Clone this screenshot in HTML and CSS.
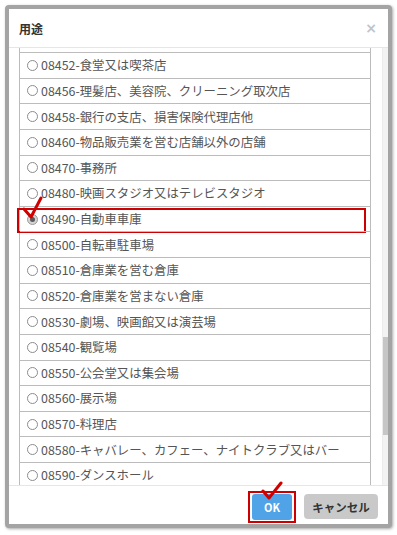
FILE: index.html
```html
<!DOCTYPE html>
<html lang="ja">
<head>
<meta charset="utf-8">
<title>用途</title>
<link rel="stylesheet" href="styles.css">
</head>
<body>
<div class="page">
  <div class="dialog">
    <div class="header">
      <span class="title">用途</span>
      <span class="close">×</span>
    </div>
    <div class="body">
      <div class="viewport">
        <div class="list">
          <div class="row-stub"></div>
          <div class="row"><span class="radio"></span><span class="label">08452-食堂又は喫茶店</span></div>
          <div class="row"><span class="radio"></span><span class="label">08456-理髪店、美容院、クリーニング取次店</span></div>
          <div class="row"><span class="radio"></span><span class="label">08458-銀行の支店、損害保険代理店他</span></div>
          <div class="row"><span class="radio"></span><span class="label">08460-物品販売業を営む店舗以外の店舗</span></div>
          <div class="row"><span class="radio"></span><span class="label">08470-事務所</span></div>
          <div class="row"><span class="radio"></span><span class="label">08480-映画スタジオ又はテレビスタジオ</span></div>
          <div class="row selected"><span class="radio checked"></span><span class="label">08490-自動車車庫</span></div>
          <div class="row"><span class="radio"></span><span class="label">08500-自転車駐車場</span></div>
          <div class="row"><span class="radio"></span><span class="label">08510-倉庫業を営む倉庫</span></div>
          <div class="row"><span class="radio"></span><span class="label">08520-倉庫業を営まない倉庫</span></div>
          <div class="row"><span class="radio"></span><span class="label">08530-劇場、映画館又は演芸場</span></div>
          <div class="row"><span class="radio"></span><span class="label">08540-観覧場</span></div>
          <div class="row"><span class="radio"></span><span class="label">08550-公会堂又は集会場</span></div>
          <div class="row"><span class="radio"></span><span class="label">08560-展示場</span></div>
          <div class="row"><span class="radio"></span><span class="label">08570-料理店</span></div>
          <div class="row"><span class="radio"></span><span class="label">08580-キャバレー、カフェー、ナイトクラブ又はバー</span></div>
          <div class="row"><span class="radio"></span><span class="label">08590-ダンスホール</span></div>
        </div>
      </div>
      <div class="scrollbar"><div class="thumb"></div></div>
    </div>
    <div class="footer">
      <button class="btn ok">OK</button>
      <button class="btn cancel">キャンセル</button>
    </div>
  </div>
  <svg class="check check-row" width="24" height="24" viewBox="0 0 24 24">
    <polyline points="3,13 10,21 20,2" fill="none" stroke="#d00000" stroke-width="3" stroke-linejoin="round" stroke-linecap="round"/>
  </svg>
  <svg class="check check-ok" width="24" height="20" viewBox="0 0 24 20">
    <polyline points="2,10 8,17 20,2" fill="none" stroke="#d00000" stroke-width="3" stroke-linejoin="round" stroke-linecap="round"/>
  </svg>
</div>
</body>
</html>
```
FILE: styles.css
```css
html, body {
  margin: 0;
  padding: 0;
  background: #ffffff;
}

body {
  font-family: "Noto Sans CJK JP", "Noto Sans", sans-serif;
  color: #555555;
}

.page {
  position: relative;
  width: 397px;
  height: 535px;
  padding: 5px 0 0 5px;
  box-sizing: border-box;
}

.dialog {
  width: 387px;
  height: 523px;
  box-sizing: border-box;
  border: 4px solid #a4a4a4;
  border-radius: 4px;
  box-shadow: 1px 1px 3px rgba(0, 0, 0, 0.35);
  background: #ffffff;
  display: flex;
  flex-direction: column;
}

.header {
  height: 39px;
  box-sizing: border-box;
  flex: none;
  border-bottom: 1px solid #e6e6e6;
  display: flex;
  align-items: center;
  justify-content: space-between;
  padding: 0 11px 0 10px;
}

.title {
  font-size: 12px;
  font-weight: bold;
  color: #333333;
}

.close {
  font-family: "DejaVu Sans", sans-serif;
  font-size: 14px;
  font-weight: bold;
  color: #c4c4c4;
  line-height: 1;
}

.body {
  flex: 1;
  min-height: 0;
  display: flex;
}

.viewport {
  flex: 1;
  overflow: hidden;
  padding: 0 11px 0 10px;
}

.list {
  border-left: 1px solid #bcbcbc;
  border-right: 1px solid #bcbcbc;
}

.row-stub {
  height: 4px;
}

.row {
  position: relative;
  height: 25.625px;
  box-sizing: border-box;
  border-top: 1px solid #bcbcbc;
  display: flex;
  align-items: center;
  padding-left: 7px;
  font-size: 12.4px;
  white-space: nowrap;
}

.radio {
  width: 11px;
  height: 11px;
  box-sizing: border-box;
  border: 1px solid #8c8c8c;
  border-radius: 50%;
  background: #ffffff;
  margin-right: 3px;
  flex: none;
  display: flex;
  align-items: center;
  justify-content: center;
}

.radio.checked {
  background: #d4d4d4;
  border-color: #9a9a9a;
}

.radio.checked::after {
  content: "";
  width: 5px;
  height: 5px;
  border-radius: 50%;
  background: #5a5a5a;
}

.label {
  color: #555555;
}

.row.selected::after {
  content: "";
  position: absolute;
  left: -3px;
  right: 4px;
  top: 1px;
  bottom: -2px;
  border: 2px solid #cc0000;
}

.scrollbar {
  width: 6px;
  flex: none;
  background: #f3f3f3;
  border-left: 1px solid #ececec;
  box-sizing: border-box;
}

.thumb {
  margin-top: 289px;
  height: 98px;
  width: 5px;
  background: #c6c6c6;
}

.footer {
  height: 39px;
  box-sizing: border-box;
  flex: none;
  border-top: 1px solid #e6e6e6;
  display: flex;
  justify-content: flex-end;
  align-items: flex-start;
  gap: 12px;
  padding: 8px 10px 0 0;
}

.btn {
  border: none;
  margin: 0;
  padding: 0;
  font-family: "Noto Sans CJK JP", "Noto Sans", sans-serif;
  font-weight: bold;
  cursor: pointer;
}

.ok {
  position: relative;
  width: 40px;
  height: 26px;
  background: #4fa3e6;
  color: #ffffff;
  border-radius: 3px;
  font-size: 11px;
}

.ok::after {
  content: "";
  position: absolute;
  left: -4px;
  right: -4px;
  top: -3px;
  bottom: -3px;
  border: 2px solid #cc0000;
}

.cancel {
  width: 74px;
  height: 25px;
  background: #c9c9c9;
  color: #333333;
  border-radius: 4px;
  font-size: 11.5px;
}

.check {
  position: absolute;
}

.check-row {
  left: 21px;
  top: 196px;
}

.check-ok {
  left: 261px;
  top: 481px;
}
```
